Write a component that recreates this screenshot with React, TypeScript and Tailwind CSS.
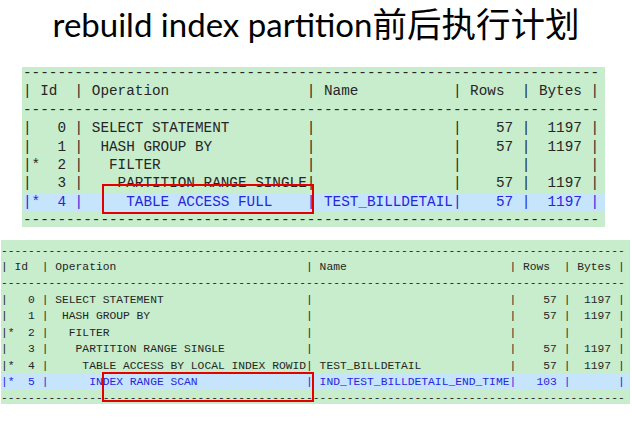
import React from "react";

type Row = { star?: boolean; id: string; op: string; name: string; rows: string; bytes: string; hl?: boolean };

const topRows: Row[] = [
  { id: "0", op: "SELECT STATEMENT", name: "", rows: "57", bytes: "1197" },
  { id: "1", op: " HASH GROUP BY", name: "", rows: "57", bytes: "1197" },
  { star: true, id: "2", op: "  FILTER", name: "", rows: "", bytes: "" },
  { id: "3", op: "   PARTITION RANGE SINGLE", name: "", rows: "57", bytes: "1197" },
  { star: true, id: "4", op: "    TABLE ACCESS FULL", name: "TEST_BILLDETAIL", rows: "57", bytes: "1197", hl: true },
];

const bottomRows: Row[] = [
  { id: "0", op: "SELECT STATEMENT", name: "", rows: "57", bytes: "1197" },
  { id: "1", op: " HASH GROUP BY", name: "", rows: "57", bytes: "1197" },
  { star: true, id: "2", op: "  FILTER", name: "", rows: "", bytes: "" },
  { id: "3", op: "   PARTITION RANGE SINGLE", name: "", rows: "57", bytes: "1197" },
  { star: true, id: "4", op: "    TABLE ACCESS BY LOCAL INDEX ROWID", name: "TEST_BILLDETAIL", rows: "57", bytes: "1197" },
  { star: true, id: "5", op: "     INDEX RANGE SCAN", name: "IND_TEST_BILLDETAIL_END_TIME", rows: "103", bytes: "", hl: true },
];

function line(r: Row, opW: number, nameW: number) {
  return (
    "|" + (r.star ? "*" : " ") + r.id.padStart(3) + " " +
    "| " + r.op.padEnd(opW) +
    "| " + r.name.padEnd(nameW) +
    "| " + r.rows.padStart(5) + " " +
    "| " + r.bytes.padStart(5) + " " +
    "|"
  );
}

function header(opW: number, nameW: number) {
  return "| Id  " + "| " + "Operation".padEnd(opW) + "| " + "Name".padEnd(nameW) + "| Rows  | Bytes |";
}

function Plan({ rows, opW, nameW, rowClass }: { rows: Row[]; opW: number; nameW: number; rowClass: string }) {
  const total = 6 + 2 + opW + 2 + nameW + 8 + 8 + 1;
  const dash = "-".repeat(total);
  return (
    <div className="whitespace-pre text-[#262626]" style={{ fontFamily: "'Liberation Mono', 'Courier New', monospace" }}>
      <div className={rowClass}>{dash}</div>
      <div className={rowClass}>{header(opW, nameW)}</div>
      <div className={rowClass}>{dash}</div>
      {rows.map((r, i) => (
        <div key={i} className={rowClass + (r.hl ? " bg-[#c6e4fb] text-[#2626dc]" : "")}>
          {line(r, opW, nameW)}
        </div>
      ))}
      <div className={rowClass}>{dash}</div>
    </div>
  );
}

export default function App() {
  return (
    <div className="w-[632px] h-[428px] bg-white overflow-hidden flex flex-col">
      <div className="h-[67px] flex justify-center items-baseline leading-[44px] text-black">
        <span className="text-[33px]" style={{ fontFamily: "Lato, 'Open Sans', sans-serif" }}>
          rebuild index partition
        </span>
        <span className="text-[34.5px]" style={{ fontFamily: "'Noto Sans CJK SC', sans-serif" }}>
          前后执行计划
        </span>
      </div>

      <div className="relative flex flex-col ml-[22px] w-[583px] h-[160px] bg-[#c7edcc]">
        <div className="-mt-[3px] pl-[1px]">
          <Plan rows={topRows} opW={25} nameW={15} rowClass="h-[18.4px] leading-[18.4px] text-[14.33px]" />
        </div>
        <div className="absolute left-[80px] top-[117px] w-[212px] h-[30px] border-2 border-[#e50000]" />
      </div>

      <div className="relative flex flex-col mt-[13px] ml-[1px] w-[629px] h-[164px] bg-[#c7edcc]">
        <div className="pt-[2.5px]">
          <Plan rows={bottomRows} opW={37} nameW={28} rowClass="h-[16.44px] leading-[16.44px] text-[11.31px]" />
        </div>
        <div className="absolute left-[101px] top-[132px] w-[212px] h-[30px] border-2 border-[#e50000]" />
      </div>
    </div>
  );
}
